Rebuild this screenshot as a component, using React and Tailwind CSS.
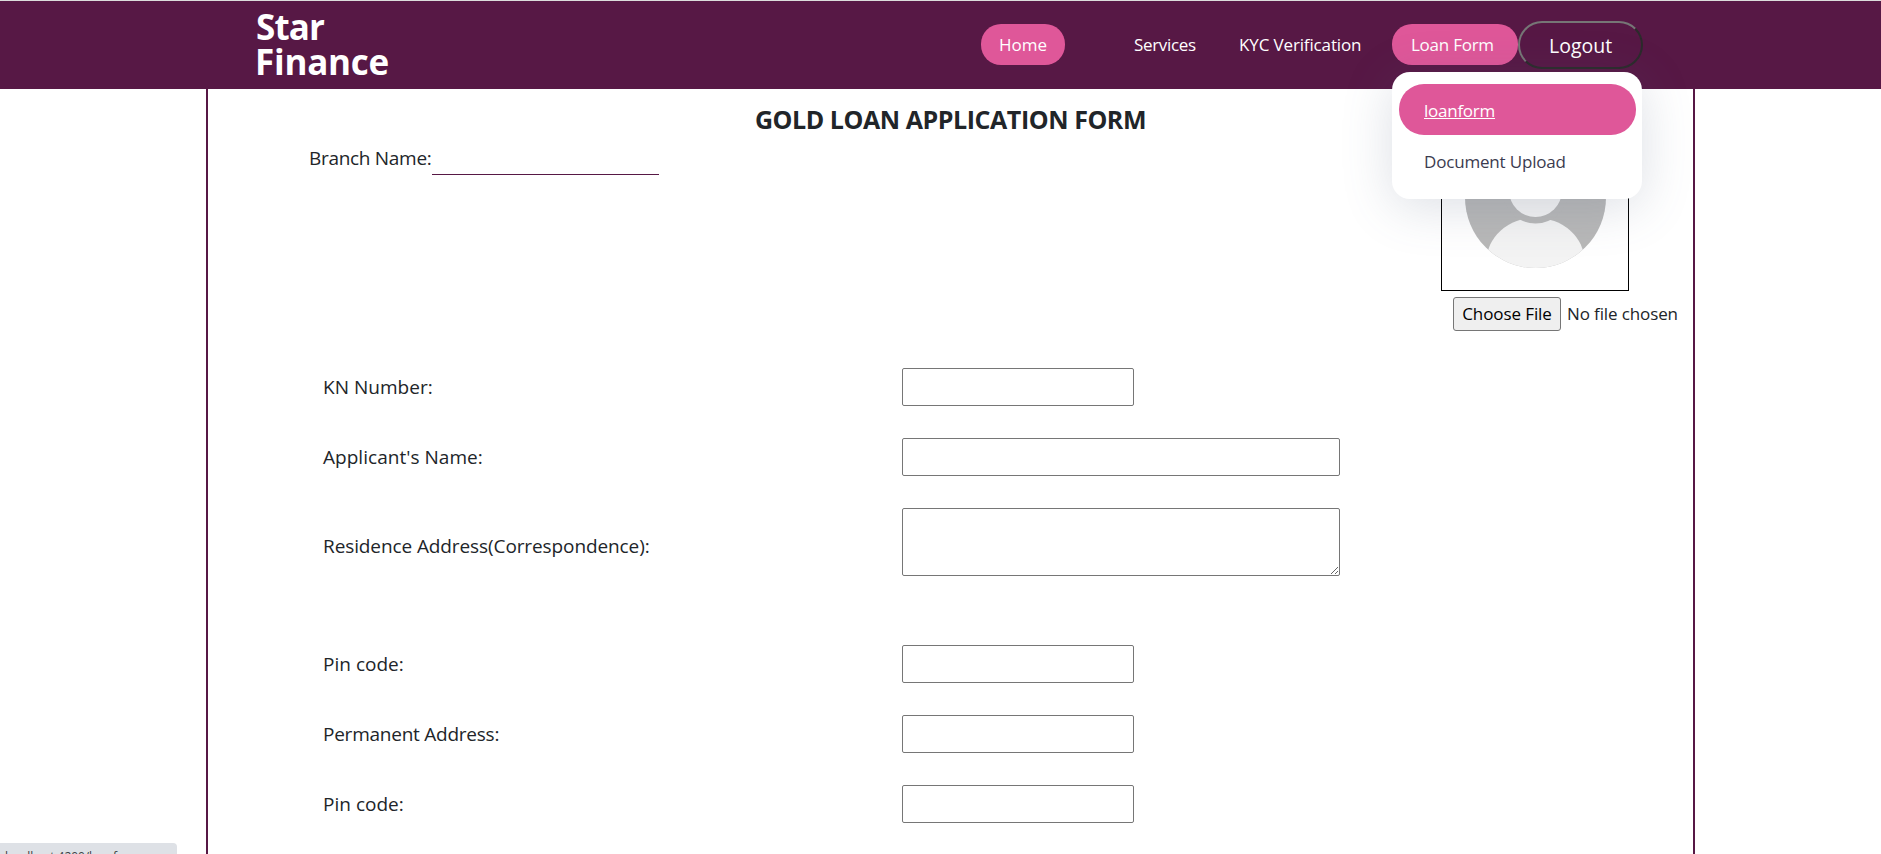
const LABEL = "text-[19px] leading-[26px] whitespace-nowrap";
const FIELD = "h-[38px] rounded-[2px] border border-[#767676] bg-white px-2 outline-none";

function Header() {
  return (
    <header className="relative z-10 flex h-[89px] justify-between border-t border-[#dcdcdc] bg-[#571845] pr-[238px] pl-[255px] text-white">
      <div className="w-[150px] pt-[8px] text-[35px] leading-[35px] font-bold">
        <div className="pl-px tracking-[-0.85px]">Star</div>
        <div className="tracking-[-0.25px]">Finance</div>
      </div>
      <nav className="flex items-start pt-[23px] text-[17px] leading-[41px] whitespace-nowrap">
        <a className="h-[41px] w-[84px] rounded-[20px] bg-[#df5799] pl-[18px]">Home</a>
        <a className="ml-[51px] h-[41px] w-[106px] pl-[18px] tracking-[-0.33px]">Services</a>
        <a className="h-[41px] w-[170px] pl-[17px] tracking-[-0.14px]">KYC Verification</a>
        <div className="relative h-[41px] w-[126px] rounded-[20px] bg-[#df5799] pl-[19px] tracking-[-0.25px]">
          Loan Form
          <div className="absolute top-[48px] left-0 h-[127px] w-[250px] rounded-[18px] bg-white px-[7px] pt-3 text-[17px] shadow-[0_8px_51px_rgba(82,95,127,0.2)]">
            <a className="block h-[51px] w-[237px] rounded-[25px] bg-[#df5799] pl-[25px] leading-[53px] tracking-[-0.25px] text-white underline">
              loanform
            </a>
            <a className="block h-[51px] pl-[25px] leading-[53px] tracking-[-0.18px] text-[#3b3b4f]">Document Upload</a>
          </div>
        </div>
        <button className="-mt-[3px] h-[48px] w-[125px] rounded-[24px] border-2 border-t-[#767676] border-r-[#2b2b2b] border-b-[#2b2b2b] border-l-[#767676] pl-[29px] text-left text-[19.5px] leading-[46px] font-medium">
          Logout
        </button>
      </nav>
    </header>
  );
}

function Avatar() {
  return (
    <svg viewBox="0 0 186 186" className="block h-[186px] w-[186px]">
      <defs>
        <clipPath id="avatar-disc">
          <circle cx="93.5" cy="93.5" r="70.5" />
        </clipPath>
      </defs>
      <g clipPath="url(#avatar-disc)">
        <rect width="186" height="186" fill="#b8b8b8" />
        <ellipse cx="93.5" cy="157.3" rx="49" ry="43.6" fill="#f3f3f3" />
        <circle cx="93.5" cy="86.6" r="33" fill="#b8b8b8" />
        <circle cx="93.5" cy="86.6" r="26.4" fill="#f3f3f3" />
      </g>
    </svg>
  );
}

function Row({ label, tracking, width = "w-[232px]" }) {
  return (
    <div className="flex h-[70px] items-center">
      <label className={`w-[580px] pl-px ${LABEL} ${tracking}`}>{label}</label>
      <input className={`${FIELD} ${width}`} />
    </div>
  );
}

export default function App() {
  return (
    <div className="h-[854px] overflow-hidden bg-white font-['Open_Sans','Noto_Sans',sans-serif] text-[#212529]">
      <Header />
      <main className="ml-[206px] h-[900px] w-[1489px] border-x-2 border-[#571845] pt-[15px]">
        <h1 className="text-center text-[25px] leading-[30px] font-bold tracking-[-0.44px]">GOLD LOAN APPLICATION FORM</h1>
        <section className="mt-[7px] flex h-[211px] justify-between pl-[100px]">
          <div className="flex h-[34px] items-center">
            <label className={`w-[124px] pl-px tracking-[-0.3px] ${LABEL}`}>Branch Name:</label>
            <input className="h-[34px] w-[227px] border-b border-[#571845] outline-none" />
          </div>
          <div className="-mt-[38px] w-[252px]">
            <div className="h-[188px] w-[188px] border border-black">
              <Avatar />
            </div>
            <div className="mt-[6px] ml-3 flex items-center gap-[5px] text-[17px] whitespace-nowrap text-black">
              <button className="h-[34px] w-[108px] rounded-[3px] border border-[#767676] bg-[#efefef] tracking-[-0.1px]">
                Choose File
              </button>
              <span className="pl-px tracking-[-0.12px] text-[#212529]">No file chosen</span>
            </div>
          </div>
        </section>
        <section className="pl-[114px]">
          <Row label="KN Number:" tracking="tracking-[0.02px]" />
          <Row label="Applicant's Name:" tracking="tracking-[0.03px]" width="w-[438px]" />
          <div className="mb-[37px] flex h-[100px] items-center">
            <label className={`w-[580px] pt-[7px] pl-px tracking-[-0.1px] ${LABEL}`}>Residence Address(Correspondence):</label>
            <textarea className="h-[68px] w-[438px] resize rounded-[2px] border border-[#767676] bg-white outline-none" />
          </div>
          <Row label="Pin code:" tracking="tracking-[0.02px]" />
          <Row label="Permanent Address:" tracking="tracking-[-0.24px]" />
          <Row label="Pin code:" tracking="tracking-[0.02px]" />
        </section>
      </main>
      <div className="fixed -bottom-[13px] left-0 h-6 w-[177px] rounded-tr-[4px] bg-[#dee1e6] pl-[5px] text-xs leading-[28px] tracking-[-0.08px] text-[#3c4043]">
        localhost:4200/loanform
      </div>
    </div>
  );
}
